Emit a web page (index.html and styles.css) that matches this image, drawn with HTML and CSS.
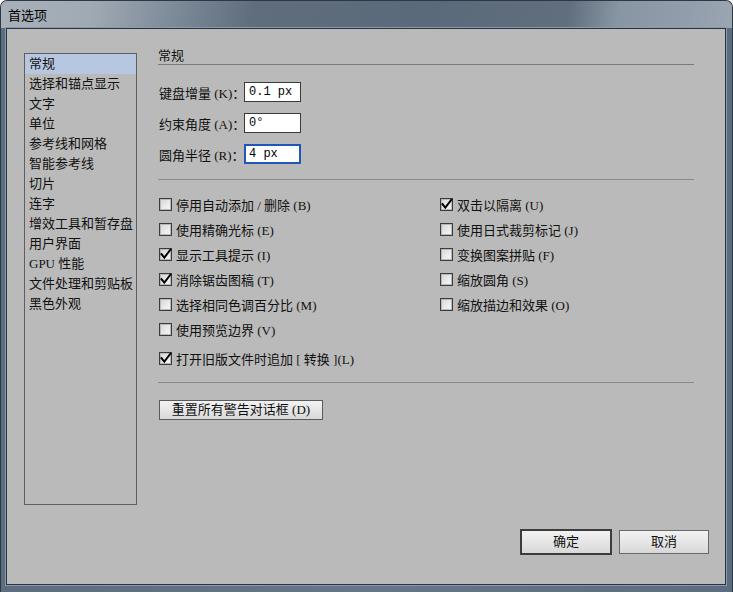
FILE: index.html
```html
<!DOCTYPE html>
<html lang="zh-CN">
<head>
<meta charset="utf-8">
<title>首选项</title>
<link rel="stylesheet" href="styles.css">
</head>
<body>
<div class="window">
  <div class="titlebar"><span class="title">首选项</span></div>
  <div class="client">
    <div class="content">
      <ul class="nav">
        <li class="sel">常规</li>
        <li>选择和锚点显示</li>
        <li>文字</li>
        <li>单位</li>
        <li>参考线和网格</li>
        <li>智能参考线</li>
        <li>切片</li>
        <li>连字</li>
        <li>增效工具和暂存盘</li>
        <li>用户界面</li>
        <li>GPU 性能</li>
        <li>文件处理和剪贴板</li>
        <li>黑色外观</li>
      </ul>
      <div class="main">
        <div class="section-title">常规</div>
        <div class="fields">
          <div class="field"><span class="label">键盘增量 (K)：</span><span class="input">0.1 px</span></div>
          <div class="field"><span class="label">约束角度 (A)：</span><span class="input">0°</span></div>
          <div class="field"><span class="label">圆角半径 (R)：</span><span class="input focus">4 px</span></div>
        </div>
        <div class="sep"></div>
        <div class="checks">
          <div class="check"><span class="cb"></span><span>停用自动添加 / 删除 (B)</span></div>
          <div class="check"><span class="cb on"><svg viewBox="0 0 13 13"><path d="M2.5 6.2 L5.3 9.6 L11.3 1.8"/></svg></span><span>双击以隔离 (U)</span></div>
          <div class="check"><span class="cb"></span><span>使用精确光标 (E)</span></div>
          <div class="check"><span class="cb"></span><span>使用日式裁剪标记 (J)</span></div>
          <div class="check"><span class="cb on"><svg viewBox="0 0 13 13"><path d="M2.5 6.2 L5.3 9.6 L11.3 1.8"/></svg></span><span>显示工具提示 (I)</span></div>
          <div class="check"><span class="cb"></span><span>变换图案拼贴 (F)</span></div>
          <div class="check"><span class="cb on"><svg viewBox="0 0 13 13"><path d="M2.5 6.2 L5.3 9.6 L11.3 1.8"/></svg></span><span>消除锯齿图稿 (T)</span></div>
          <div class="check"><span class="cb"></span><span>缩放圆角 (S)</span></div>
          <div class="check"><span class="cb"></span><span>选择相同色调百分比 (M)</span></div>
          <div class="check"><span class="cb"></span><span>缩放描边和效果 (O)</span></div>
          <div class="check"><span class="cb"></span><span>使用预览边界 (V)</span></div>
          <div class="check empty"></div>
          <div class="check wide"><span class="cb on"><svg viewBox="0 0 13 13"><path d="M2.5 6.2 L5.3 9.6 L11.3 1.8"/></svg></span><span>打开旧版文件时追加 [ 转换 ](L)</span></div>
        </div>
        <div class="sep sep2"></div>
        <button class="btn reset">重置所有警告对话框 (D)</button>
      </div>
    </div>
    <div class="footer">
      <button class="btn ok">确定</button>
      <button class="btn cancel">取消</button>
    </div>
  </div>
</div>
</body>
</html>
```
FILE: styles.css
```css
html, body {
  margin: 0;
  padding: 0;
}
body {
  width: 733px;
  height: 592px;
  overflow: hidden;
  font-family: "Liberation Serif", "Noto Sans CJK SC", serif;
  font-size: 13px;
  color: #111;
  background: #fff;
}
.window {
  width: 733px;
  height: 592px;
  box-sizing: border-box;
  display: flex;
  flex-direction: column;
  background: linear-gradient(90deg, #5d6d80 0, #65768a 50%, #5d6d80 100%);
  border-radius: 7px 7px 0 0;
  border: 1px solid #2c3844;
  border-bottom: none;
  overflow: hidden;
}
.titlebar {
  height: 27px;
  flex: none;
  display: flex;
  align-items: center;
  padding-left: 7px;
  background: linear-gradient(100deg, #a8b1ba 0, #a0aab4 90px, #7e8b99 170px, #5f6d7d 250px, #5b6a7a 420px, #606e7e 560px, #8895a2 610px, #939ead 680px, #9ca7b2 733px);
}
.title {
  font-family: "Noto Sans CJK SC", sans-serif;
  font-size: 13px;
  color: #000;
  position: relative;
  top: 0;
}
.client {
  flex: 1;
  margin: 0 6px 7px 5px;
  border: 1px solid #2a3442;
  box-shadow: 0 0 0 1px #8a9aac;
  background: #bababa;
  display: flex;
  flex-direction: column;
}
.content {
  display: flex;
  padding-left: 17px;
}
.nav {
  list-style: none;
  margin: 24px 0 0 0;
  padding: 0;
  width: 113px;
  height: 452px;
  box-sizing: border-box;
  border: 1px solid #5e5e5e;
  flex: none;
}
.nav li {
  height: 20px;
  line-height: 20px;
  padding-left: 4px;
  white-space: nowrap;
}
.nav li.sel {
  background: #b7c7e1;
}
.main {
  margin-left: 21px;
  width: 536px;
  padding-top: 19px;
}
.section-title {
  height: 16px;
  line-height: 16px;
  border-bottom: 1px solid #7c7c7c;
}
.fields {
  margin-top: 17px;
  display: flex;
  flex-direction: column;
  gap: 11px;
  padding-left: 1px;
}
.field {
  display: flex;
  align-items: center;
  height: 20px;
}
.label {
  width: 85px;
  white-space: nowrap;
}
.input {
  width: 57px;
  height: 20px;
  box-sizing: border-box;
  border: 1px solid #3a3a3a;
  background: #fff;
  font-family: "Liberation Mono", monospace;
  font-size: 12px;
  line-height: 18px;
  padding-left: 4px;
  color: #000;
}
.input.focus {
  border: 2px solid #2056b8;
  line-height: 16px;
  padding-left: 3px;
}
.sep {
  height: 1px;
  background: #8a8a8a;
  margin-top: 15px;
}
.checks {
  margin-top: 14px;
  display: grid;
  grid-template-columns: 281px 1fr;
  row-gap: 5px;
  padding-left: 1px;
}
.check {
  height: 20px;
  display: flex;
  align-items: center;
  gap: 4px;
  white-space: nowrap;
}
.check.wide {
  grid-column: 1 / 3;
  margin-top: 4px;
}
.cb {
  width: 13px;
  height: 13px;
  box-sizing: border-box;
  border: 1px solid #3c3c3c;
  background: linear-gradient(135deg, #d4d4d4 0, #ececec 60%, #f6f6f6 100%);
  box-shadow: inset 0 0 0 1px #b8b8b8;
  position: relative;
  flex: none;
}
.cb svg {
  position: absolute;
  left: -1px;
  top: -1px;
  width: 13px;
  height: 13px;
  overflow: visible;
}
.cb svg path {
  fill: none;
  stroke: #000;
  stroke-width: 2;
  stroke-linecap: square;
}
.sep2 {
  margin-top: 14px;
}
.btn {
  font-family: "Liberation Serif", "Noto Sans CJK SC", serif;
  font-size: 13px;
  color: #111;
  background: linear-gradient(#f2f2f2 0, #e6e6e6 50%, #d8d8d8 100%);
  border: 1px solid #5a5a5a;
  padding: 0;
  margin: 0;
  box-sizing: border-box;
  line-height: 16px;
}
.reset {
  margin-top: 17px;
  margin-left: 1px;
  width: 164px;
  height: 20px;
}
.footer {
  margin-top: auto;
  display: flex;
  justify-content: flex-end;
  align-items: center;
  gap: 7px;
  padding: 0 16px 29px 0;
}
.ok {
  width: 92px;
  height: 26px;
  border: 2px solid #3c3c3c;
}
.cancel {
  width: 90px;
  height: 24px;
  border: 1px solid #6a6a6a;
}
```
